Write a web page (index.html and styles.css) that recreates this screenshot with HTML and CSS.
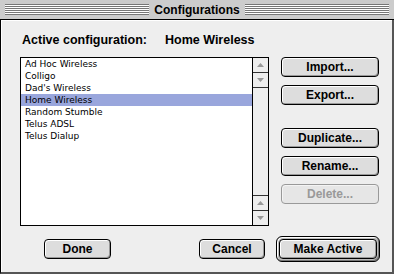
FILE: index.html
```html
<!DOCTYPE html>
<html lang="en">
<head>
    <meta charset="UTF-8">
    <title>Configurations</title>
    <link rel="stylesheet" href="styles.css">
</head>
<body>

    <div class="window">
        <div class="titlebar">
            <span class="stripes"></span>
            <span class="title">Configurations</span>
            <span class="stripes"></span>
        </div>

        <div class="content">
            <div class="active-row">
                <span class="label">Active configuration:</span>
                <span class="value">Home Wireless</span>
            </div>

            <div class="main">
                <div class="listbox">
                    <ul class="items">
                        <li>Ad Hoc Wireless</li>
                        <li>Colligo</li>
                        <li>Dad's Wireless</li>
                        <li class="selected">Home Wireless</li>
                        <li>Random Stumble</li>
                        <li>Telus ADSL</li>
                        <li>Telus Dialup</li>
                    </ul>
                    <div class="scrollbar">
                        <div class="arrow"><svg width="7" height="4" viewBox="0 0 7 4"><path d="M3.5 0 L7 4 L0 4 Z" fill="#999"/></svg></div>
                        <div class="arrow"><svg width="7" height="4" viewBox="0 0 7 4"><path d="M0 0 L7 0 L3.5 4 Z" fill="#999"/></svg></div>
                        <div class="track"></div>
                        <div class="arrow"><svg width="7" height="4" viewBox="0 0 7 4"><path d="M3.5 0 L7 4 L0 4 Z" fill="#999"/></svg></div>
                        <div class="arrow last"><svg width="7" height="4" viewBox="0 0 7 4"><path d="M0 0 L7 0 L3.5 4 Z" fill="#999"/></svg></div>
                    </div>
                </div>

                <div class="side-buttons">
                    <button class="btn">Import...</button>
                    <button class="btn">Export...</button>
                    <button class="btn spaced">Duplicate...</button>
                    <button class="btn">Rename...</button>
                    <button class="btn" disabled>Delete...</button>
                </div>
            </div>

            <div class="footer">
                <button class="btn done">Done</button>
                <button class="btn cancel">Cancel</button>
                <div class="default-ring">
                    <button class="btn make-active">Make Active</button>
                </div>
            </div>
        </div>
    </div>

</body>
</html>
```

FILE: styles.css
```css
body {
    margin: 0;
    padding: 0;
    background-color: #eeeeee;
    font-family: "Liberation Sans", Arial, sans-serif;
}

.window {
    width: 394px;
    height: 274px;
    display: flex;
    flex-direction: column;
    box-sizing: border-box;
}

/* Title bar with the pinstripes */
.titlebar {
    height: 19px;
    flex-shrink: 0;
    background: #cccccc;
    border-bottom: 1px solid #000;
    display: flex;
    align-items: center;
    padding: 0 5px;
    gap: 5px;
}

.stripes {
    flex: 1;
    height: 11px;
    background: repeating-linear-gradient(to bottom, #777 0 1px, #fff 1px 2px);
}

.title {
    font-weight: bold;
    font-size: 12px;
    color: #000;
}

.content {
    flex: 1;
    background: #eeeeee;
    border-left: 1px solid #000;
    border-right: 2px solid #555;
    border-bottom: 2px solid #555;
    box-shadow: inset 1px 1px 0 #fff;
    padding: 13px 0 0 19px;
}

.active-row {
    height: 14px;
    line-height: 14px;
    font-size: 12.5px;
    font-weight: bold;
    display: flex;
}

.label {
    margin-left: 2px;
    width: 143px;
}

.main {
    margin-top: 10px;
    display: flex;
    align-items: flex-start;
}

/* List of configurations */
.listbox {
    width: 247px;
    height: 167px;
    border: 1px solid #000;
    background: #fff;
    display: flex;
}

.items {
    list-style: none;
    margin: 0;
    padding: 0;
    flex: 1;
    font-family: "DejaVu Sans", sans-serif;
    font-size: 9px;
}

.items li {
    height: 12px;
    line-height: 12px;
    padding-left: 4px;
    color: #000;
}

.items li.selected {
    background: #99a6dc;
}

.scrollbar {
    width: 15px;
    border-left: 1px solid #000;
    background: #eeeeee;
    display: flex;
    flex-direction: column;
}

.arrow {
    height: 14px;
    border-bottom: 1px solid #333;
    display: flex;
    align-items: center;
    justify-content: center;
}

.arrow.last {
    border-bottom: none;
}

.track {
    flex: 1;
    border-bottom: 1px solid #333;
}

/* Buttons */
.btn {
    height: 20px;
    padding: 0;
    border: 1px solid #000;
    border-radius: 4px;
    background: #dddddd;
    box-shadow: inset 1px 1px 0 #fff, inset -1px -1px 0 #999;
    font-family: "Liberation Sans", Arial, sans-serif;
    font-size: 12px;
    font-weight: bold;
    color: #000;
}

.btn:disabled {
    border-color: #999;
    color: #999;
    background: #e6e6e6;
    box-shadow: inset 1px 1px 0 #f4f4f4;
}

.side-buttons {
    margin-left: 12px;
    display: flex;
    flex-direction: column;
    gap: 8px;
}

.side-buttons .btn {
    width: 98px;
}

.side-buttons .spaced {
    margin-top: 15px;
}

.footer {
    margin-top: 10px;
    display: flex;
    align-items: center;
}

.done {
    width: 67px;
    margin-left: 24px;
    margin-right: auto;
}

.cancel {
    width: 66px;
}

.default-ring {
    margin-left: 11px;
    margin-right: 12px;
    padding: 2px;
    border: 1px solid #000;
    border-radius: 6px;
    background: #bbbbbb;
    box-shadow: inset 1px 1px 0 #fff, inset -1px -1px 0 #777;
    display: flex;
}

.make-active {
    width: 98px;
}
```
